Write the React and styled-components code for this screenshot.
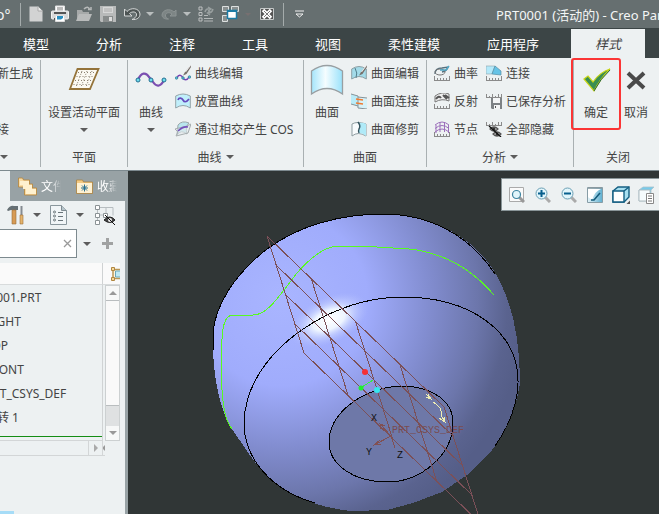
import React from 'react'
import styled, { createGlobalStyle, css } from 'styled-components'

const GlobalStyle = createGlobalStyle`
  *, *::before, *::after { box-sizing: border-box; }
  body { margin: 0; overflow: hidden; background: #303636; }
  body, button, input { font-family: 'Noto Sans', 'Noto Sans CJK SC', sans-serif; font-size: 12px; }
  button { padding: 0; border: 0; background: none; color: inherit; }
  ul { margin: 0; padding: 0; list-style: none; }
  svg { display: block; flex: none; }
`

const Page = styled.div`
  display: flex;
  flex-direction: column;
  min-height: 100vh;
  color: #444;
  overflow: hidden;
`

/* title bar */
const TitleBar = styled.header`
  display: flex;
  align-items: center;
  height: 28px;
  background: #666f70;
  color: #f4f6f6;
  white-space: nowrap;
`
const AppName = styled.span`
  width: 20px;
  margin-left: -4px;
  font-size: 14px;
`
const BarDivider = styled.span`
  width: 1px;
  height: 23px;
  margin: 0 3px 0 4px;
  background: #a4abab;
`
const QuickButton = styled.button`
  display: flex;
  align-items: center;
  justify-content: center;
  width: 24px;
  height: 24px;
`
const QuickArrow = styled(QuickButton)`
  width: 12px;
  margin-right: 1px;
`
const DocTitle = styled.h1`
  flex: 0 0 163px;
  margin: 0 0 0 auto;
  overflow: hidden;
  font-size: 13px;
  font-weight: 400;
`

/* ribbon tabs */
const TabBar = styled.nav`
  display: flex;
  align-items: flex-end;
  height: 30px;
  background: #3c4546;
`
const Tab = styled.button`
  flex: none;
  height: 29px;
  padding: 0 24px 0 23px;
  color: #fff;
  font-size: 13px;
  ${props => props.$active && css`
    margin-left: 8px;
    padding: 0 24px;
    background: #edf1f2;
    color: #444;
    font-style: italic;
  `}
`

/* ribbon */
const Ribbon = styled.section`
  display: flex;
  height: 113px;
  padding: 2px 0 3px;
  background: #edf1f2;
  border-bottom: 1px solid #7d8a8f;
`
const Group = styled.div`
  flex: 0 0 ${props => props.$width}px;
  display: flex;
  flex-direction: column;
  justify-content: space-between;
  border-right: 1px solid #a9b0b2;
  &:last-child { border-right: 0; }
`
const GroupBody = styled.div`
  display: flex;
  gap: ${props => props.$gap || 0}px;
  padding-left: ${props => props.$left || 0}px;
  justify-content: ${props => (props.$center ? 'center' : 'flex-start')};
`
const GroupLabel = styled.div`
  display: flex;
  align-items: center;
  justify-content: ${props => (props.$start ? 'flex-start' : 'center')};
  gap: 4px;
  height: 20px;
  overflow: hidden;
`
const BigButton = styled.button`
  position: relative;
  display: flex;
  flex-direction: column;
  align-items: center;
  flex: none;
  min-width: ${props => props.$width || 36}px;
  height: 82px;
  padding-top: 4px;
  white-space: nowrap;
`
const BigLabel = styled.span`
  margin: 8px 0 6px;
  line-height: 18px;
`
const Marker = styled.span`
  position: absolute;
  inset: -2px -5px 12px -5px;
  border: 2px solid #fb3535;
  border-radius: 3px;
`
const Column = styled.div`
  display: flex;
  flex-direction: column;
  gap: 2px;
`
const SmallButton = styled.button`
  display: flex;
  align-items: center;
  gap: 4px;
  height: 26px;
  white-space: nowrap;
`
const ClippedColumn = styled(Column)`
  margin-left: -15px;
`

/* work area */
const Work = styled.main`
  flex: 1;
  display: flex;
`
const Side = styled.aside`
  flex: 0 0 128px;
  display: flex;
  flex-direction: column;
  border-right: 3px solid #98a2a5;
  background: #edf1f2;
  overflow: hidden;
`
const SideTabs = styled.div`
  display: flex;
  height: 30px;
  background: #98a2a5;
  color: #fff;
`
const SideTab = styled.button`
  flex: 0 0 ${props => props.$width}px;
  display: flex;
  align-items: center;
  gap: 4px;
  padding-left: 8px;
  background: ${props => (props.$active ? '#edf1f2' : 'transparent')};
  overflow: hidden;
  white-space: nowrap;
`
const FadeText = styled.span`
  width: 20px;
  overflow: hidden;
  text-align: left;
  mask-image: linear-gradient(90deg, #000 50%, transparent);
`
const SideTools = styled.div`
  display: flex;
  align-items: center;
  gap: 9px;
  height: 28px;
  padding-left: 7px;
`
const PlainButton = styled.button`
  display: flex;
  align-items: center;
  justify-content: center;
  min-width: ${props => props.$width || 0}px;
`
const SearchRow = styled.div`
  display: flex;
  align-items: center;
  gap: 6px;
  height: 29px;
`
const SearchBox = styled.div`
  display: flex;
  align-items: center;
  width: 77px;
  height: 29px;
  padding-right: 4px;
  border: 1px solid #7d8a8f;
  border-left: 0;
  background: #fff;
`
const SearchInput = styled.input`
  flex: 1;
  min-width: 0;
  border: 0;
  outline: 0;
  background: transparent;
`
const Tree = styled.div`
  display: grid;
  grid-template-columns: 103px 17px;
  margin-top: 5px;
`
const TreeHead = styled.div`
  display: flex;
  justify-content: flex-end;
  align-items: center;
  height: 22px;
  background: #fafafa;
  border-right: ${props => (props.$line ? '1px solid #cfd2d3' : 0)};
  border-bottom: 1px solid #d8dbdc;
  overflow: hidden;
`
const TreeList = styled.ul`
  height: 156px;
  border-right: 1px solid #d0d3d4;
  border-bottom: 1px solid #d3d6d7;
  overflow: hidden;
`
const TreeItem = styled.li`
  height: 24px;
  margin-left: ${props => (props.$root ? -32 : -15)}px;
  line-height: 26px;
  font-size: 12px;
  white-space: nowrap;
`
const InsertLine = styled.li`
  height: 1px;
  margin-top: 7px;
  background: #148d14;
`
const VScroll = styled.div`
  display: flex;
  flex-direction: column;
  margin-left: 2px;
  border: 1px solid #ccd0d1;
  background: #dfe1e2;
`
const ScrollButton = styled.button`
  display: flex;
  align-items: center;
  justify-content: center;
  height: 14px;
  background: #f7f8f8;
`
const Thumb = styled.div`
  flex: 1;
  margin-bottom: 20px;
  background: #f9f9f9;
  border-top: 1px solid #b9bdbf;
  border-bottom: 1px solid #b9bdbf;
`
const HScroll = styled.div`
  display: flex;
  justify-content: flex-end;
  height: 15px;
  width: 105px;
  border-bottom: 1px solid #d3d6d7;
`
const HScrollButton = styled(ScrollButton)`
  width: ${props => props.$width}px;
  border-left: 1px solid #d3d6d7;
  background: #edf1f2;
  overflow: hidden;
`
const SideFoot = styled.div`
  width: 14px;
  height: 3px;
  margin-top: auto;
  background: #a6dcf7;
`

const Viewport = styled.section`
  position: relative;
  flex: 1;
  min-width: 0;
  background: #303636;
  overflow: hidden;
`
const Scene = styled.svg`
  width: 100%;
  height: auto;
`
const ViewTools = styled.div`
  position: absolute;
  top: 7px;
  left: 373px;
  display: flex;
  align-items: center;
  gap: 2px;
  height: 33px;
  padding: 0 3px;
  border: 1px solid #899598;
  background: #edf1f2;
`

const Arrow = ({ color = '#5c5c5c', size = 8 }) => (
  <svg width={size} height={size / 2} viewBox="0 0 8 4"><path d="M0 0h8L4 4z" fill={color} /></svg>
)

const Icon = ({ size = 16, w, h, box = '0 0 16 16', children }) => (
  <svg width={w || size} height={h || size} viewBox={box} fill="none">{children}</svg>
)

const Ruler = ({ y = 15.5, up }) => (
  <path d={up ? `M.5 1v4M3.5 3v2M6.5 1v4M9.5 3v2M12.5 1v4M15.5 1v4M0 ${y}h16` : `M.5 11v4M3.5 13v2M6.5 13v2M9.5 13v2M12.5 13v2M15.5 11v4M0 ${y}h16`} stroke="#8a8a8a" />
)

const Pencil = () => (
  <>
    <path d="M15.500 .5L10 7l-2 3.500L11.500 9 16 2z" fill="#77706b" />
    <path d="M15 1l-4.500 6" stroke="#eee" />
  </>
)

const icons = {
  doc: <Icon w={14} h={16} box="0 0 14 16"><path d="M.5.500h8.500l4.500 4.500v10.500H.5z" fill="#d2d3d3" /><path d="M9 .5V5h4.500" fill="#eee" stroke="#aaa" /></Icon>,
  print: <Icon size={18} box="0 0 18 18"><path d="M4.500 6V1h9v5" fill="#fff" stroke="#e0e0e0" /><path d="M6 3h6M6 5h6" stroke="#777" /><rect x=".5" y="6" width="17" height="8" rx="1" fill="#d7d8d8" stroke="#f2f2f2" /><path d="M3 8h12M3 14h3" stroke="#555" strokeWidth="2" /><path d="M4.500 10.500h9v6h-9z" fill="#fff" stroke="#ddd" /><path d="M6 11h6v2l-2 1.500H6z" fill="#2b8fc0" /></Icon>,
  open: <Icon><path d="M1 15V4h5l1 2h6v3" fill="#a6a9a9" /><path d="M0 15l3-7h13l-3 7z" fill="#b9bbbb" /><path d="M8 3q4-4 6 1m-2-.5h3V1" stroke="#b6b9b9" strokeWidth="1.500" /></Icon>,
  save: <Icon><path d="M0 0h16v16H1l-1-1z" fill="#b8baba" /><path d="M3 1h10v6H3z" fill="#d6d7d7" /><path d="M4 3h8M4 5h8" stroke="#aaa" /><path d="M3 10h10v6H3z" fill="#888c8c" /><path d="M9 11h3v4H9z" fill="#ddd" /></Icon>,
  undo: <Icon w={18} h={14} box="0 0 18 14"><path d="M1.500 2v7H9L6.500 6.500C9 4 14 4.500 13.500 8c-.2 2-2 3.500-4.500 4.500 5 .5 8-2 8-5.500C16.500 1 8 0 4 4.500z" fill="#4d5454" stroke="#d5d8d8" /></Icon>,
  redo: <Icon w={16} h={13} box="0 0 16 13"><path d="M15 2v6H9l2-2C8 3.500 4 5 4.500 8c.2 1.500 1.500 2.500 3 3C3 11.500 1 9 1 7 1.500 1.500 9 0 13 4z" fill="#7d8585" stroke="#8c9393" /></Icon>,
  regen: <Icon><path d="M1 1h3v3H1zM1 6.500h3v3H1zM1 12h3v3H1z" stroke="#bdc0c0" /><path d="M6 12.500h9M6 15h9M6 9.500h4" stroke="#b4b8b8" /><path d="M7 6q1-4 5-3m3 0q-1 4-5 4M10 1l3 2-3 2M12 5L9.500 7 12 9" stroke="#989f9f" strokeWidth="1.500" /></Icon>,
  windows: <Icon w={17} h={17} box="0 0 17 17"><path d="M.5.500h6v5h-6zM9.500.500h7v5h-7zM.5 9.500h5v6h-5z" fill="#8a9090" stroke="#dde0e0" /><path d="M5.500 4.500h9v8h-9z" fill="#fff" stroke="#1d7ba4" strokeWidth="1.500" /><path d="M5 5h10" stroke="#1d7ba4" strokeWidth="2" /></Icon>,
  closeDoc: <Icon w={14} h={12} box="0 0 14 12"><path d="M.5.500h13v11H.5z" fill="#555" stroke="#c4c8c8" /><path d="M3 2l8 8M11 2l-8 8" stroke="#fff" strokeWidth="3.500" /><path d="M4 3l6 6M10 3L4 9" stroke="#777" /></Icon>,
  overflow: <Icon w={9} h={8} box="0 0 9 8"><path d="M0 1h9M1 4h7L4.500 7z" stroke="#f1f1f1" /></Icon>,
  plane: <Icon w={32} h={32} box="0 0 32 32"><path d="M9.500 5h21L22 25H2z" fill="#fbf9f2" stroke="#94733a" strokeWidth="1.800" /><path d="M10 8.500h17M8.500 12.500h17M7 16.500h17M5.500 20.500h17" stroke="#8a8070" strokeDasharray="1 2" /><path d="M14 7l-6 16M19 7l-6 16M24 7l-6 16" stroke="#8a8070" strokeDasharray="1 2" /></Icon>,
  curve: <Icon w={32} h={32} box="0 0 32 32"><path d="M3 16C6 8 11 8 14 13l4 5c4 6 8 4 11-2" stroke="#7b4fb1" strokeWidth="2.200" /><g fill="#6ddbed" stroke="#236f91"><circle cx="3" cy="16" r="2" /><circle cx="16" cy="16" r="2" /><circle cx="29" cy="16" r="2" /></g></Icon>,
  curveEdit: <Icon><path d="M2 13c2-5 5-2 6 0s4 3 6-1" stroke="#7542b4" strokeWidth="1.500" /><g fill="#4fbdd6" stroke="#2a6d87" strokeWidth=".6"><circle cx="1.500" cy="13" r="1.300" /><circle cx="8" cy="13" r="1.300" /><circle cx="14.500" cy="12" r="1.300" /></g><Pencil /></Icon>,
  curveDrop: <Icon><path d="M.7 3Q8-1 15.300 3v12Q8 10 .7 15z" fill="#c0effb" stroke="#94a3a8" /><path d="M3 7c1-3 4-2 5 0s3 3 6-1" stroke="#654abd" strokeWidth="1.700" /></Icon>,
  cos: <Icon><path d="M3 4Q7-1 14 2q-4 4-2 11Q6 8 2 14z" fill="#b9e5ee" stroke="#9aa7aa" /><path d="M0 8l12-3 4-2-3 9-12 3 2-4z" fill="#e4ebec" fillOpacity=".6" stroke="#a6adaf" /><path d="M3 10q5-5 10-4" stroke="#7451bb" strokeWidth="1.600" /></Icon>,
  surface: <Icon w={34} h={32} box="0 0 34 32"><defs><linearGradient id="sf"><stop stopColor="#a4e5fb" /><stop offset=".45" stopColor="#f5fdff" /><stop offset="1" stopColor="#9ae2fb" /></linearGradient></defs><path d="M1.500 7Q17-4 32.500 7v23Q17 19 1.500 30z" fill="url(#sf)" stroke="#999fa2" strokeWidth="1.300" /></Icon>,
  surfEdit: <Icon><path d="M.7 4Q8-1 15.300 4v10Q8 9 .7 14z" fill="#a3dbe9" stroke="#8ea0a5" /><path d="M4 3q3 5 1 10" stroke="#527d8a" /><Pencil /></Icon>,
  surfJoin: <Icon><path d="M0 1l7 2v10l-7-2z" fill="#b9ebf7" /><path d="M7 4l9 1v10H7z" fill="#d6f1f8" /><path d="M0 1l7 2v12M7 4l9 1M7 15l9 1M0 11l7 2" stroke="#879398" /><path d="M5 6l7 1M5 10l7 1" stroke="#ef7b32" strokeWidth="1.700" /></Icon>,
  surfTrim: <Icon><path d="M1 3q5-3 14 0v12Q7 10 1 15z" fill="#f8fbfc" stroke="#8f9da1" /><path d="M8 2q2 4 0 6v4q4 0 7 3V3q-3-2-7-1z" fill="#b0eaf8" /><path d="M7 1q3 4 1 7-1 2 0 4" stroke="#34535e" strokeWidth="1.400" /></Icon>,
  curvature: <Icon><Ruler /><path d="M1 9q0-6 7-6l6-1q-1 4-6 5" stroke="#55707e" strokeWidth="1.400" /><ellipse cx="6" cy="7" rx="5" ry="3" stroke="#777" /><path d="M6 5h6l3-4" stroke="#50a9c7" strokeWidth="1.500" /></Icon>,
  reflect: <Icon><Ruler /><path d="M1 3Q8-2 15 1v7Q8 5 1 9z" fill="#eee" stroke="#777" /><path d="M2 6q3-4 5-1M9 2l4 4M11 2l4 3" stroke="#555" strokeWidth="2" /></Icon>,
  knots: <Icon><Ruler /><path d="M1 4q7-6 14 0M1 7.500q7-6 14 0M1 11q7-6 14 0M2 12V4M6 11V1M10.500 11V1M14.500 12V4" stroke="#9c70bb" /></Icon>,
  link: <Icon><Ruler /><path d="M0 1h9L6 9H0z" fill="#b4e9fa" stroke="#8da1a8" strokeWidth=".6" /><path d="M9 1l6 5v4L6 9z" fill="#66c3e6" stroke="#538ca4" strokeWidth=".7" /></Icon>,
  saved: <Icon><Ruler up y={4.5} /><path d="M5 5h11v11H6l-1-1z" fill="#7d8285" /><path d="M7 5h7v5H7zM8 12h6v4H8z" fill="#f3f5f6" /><path d="M9.500 13v2" stroke="#555" /></Icon>,
  hideAll: <Icon><Ruler up y={4.500} /><g stroke="#555" strokeWidth="1.200" fill="#ddd"><path d="M4 8q4-4 8 0-4 4-8 0zM7 13q4-4 8 0-4 4-8 0z" /></g><g fill="#333"><circle cx="8" cy="8" r="1.500" /><circle cx="11" cy="13" r="1.500" /></g><path d="M3 5l12 11" stroke="#111" strokeWidth="1.300" /></Icon>,
  ok: <Icon w={32} h={32} box="0 0 32 32"><path d="M4 15l4-3 5 6Q20 8 30 5 20 15 14 27z" fill="#3b8e52" stroke="#c9d515" strokeWidth="1.200" /><path d="M14 27Q20 15 30 6" stroke="#276641" /></Icon>,
  cancel: <Icon w={32} h={32} box="0 0 32 32"><path d="M8 9l16 15M24 9L8 24" stroke="#4a4a4a" strokeWidth="4" /></Icon>,
  folders: <Icon w={19} h={19} box="0 0 19 19"><g fill="#f9dba4" stroke="#b58439" strokeWidth=".8"><path d="M.5 1h4l1 2h6v7H.5z" /><path d="M3.500 5h4l1 2h6v7h-6z" /><path d="M6.500 9h4l1 2h7v7h-12z" /></g><path d="M2 4h9v4H2zM5 8h9v4H5zM8 12h10v5H8z" fill="#fff1cf" /></Icon>,
  favorites: <Icon w={17} h={15} box="0 0 17 15"><path d="M.5 1h6l1 2h9v11.500H.5z" fill="#f3c982" stroke="#a67b38" strokeWidth=".7" /><path d="M1 4h15v10H1z" fill="#fff1d2" /><path d="M8.500 5.500v7M5 9h7M6 6.500l5 5M11 6.500l-5 5" stroke="#256e91" /></Icon>,
  tools: <Icon w={17} h={20} box="0 0 17 20"><path d="M0 5q3-5 7-4h4v4H4L1 6z" fill="#667075" /><path d="M5 5h4v14H5z" fill="#d79b55" stroke="#99713e" strokeWidth=".6" /><path d="M14.500 1v9" stroke="#858b91" strokeWidth="2" /><path d="M13 10h3v9h-3z" fill="#e4b46c" stroke="#9e713a" strokeWidth=".6" /></Icon>,
  list: <Icon w={17} h={20} box="0 0 17 20"><path d="M.5.500h11l5 5v14H.5z" fill="#f1f5f7" stroke="#8a979d" /><path d="M11.500.500v5h5" fill="#b7c5cb" stroke="#7f8b91" /><g stroke="#6a757a"><circle cx="4.500" cy="7" r="1" /><circle cx="4.500" cy="11" r="1" /><circle cx="4.500" cy="15" r="1" /><path d="M8 7.500h5M8 11.500h5M8 15.500h5" /></g></Icon>,
  hideTree: <Icon w={20} h={20} box="0 0 20 20"><path d="M4 2.500h14v8M11 3v7M2.500 4v13M4 10h6" stroke="#b7bdc0" /><path d="M.5.500h4v4h-4zM.5 8.500h4v4h-4zM.5 15.500h4v4h-4zM8.500 8.500h4v4h-4z" fill="#fff" stroke="#8b9295" /><path d="M9 15q6-6 11 0-5 5-11 0z" fill="#444" stroke="#222" /><circle cx="15" cy="15" r="2" fill="#eee" /><path d="M10 10l10 10" stroke="#111" /></Icon>,
  frame: <Icon w={9} h={14} box="0 0 9 14"><path d="M2 2.500h12v9H2z" fill="#fff6df" stroke="#ba9756" strokeWidth="1.500" /><path d="M4.500 4h8v6h-8z" fill="#bfeaf4" stroke="#6ba6b8" /><path d="M.5.500h3v3h-3zM.5 10.500h3v3h-3z" fill="#f5d999" stroke="#b08640" /></Icon>,
  clear: <Icon w={9} h={9} box="0 0 9 9"><path d="M1 1l7 7M8 1L1 8" stroke="#999" strokeWidth="1.300" /></Icon>,
  plus: <Icon w={11} h={11} box="0 0 11 11"><path d="M5.500 0v11M0 5.500h11" stroke="#a0a2a2" strokeWidth="3" /></Icon>,
  zoomFit: <Icon w={16} h={16}><path d="M.5.500h14v14H.5z" fill="#fafafa" stroke="#aaa" /><path d="M10 10l5 5" stroke="#999" strokeWidth="3" /><circle cx="7.500" cy="7.500" r="4" fill="#e1f5fb" stroke="#3d84a0" strokeWidth="1.200" /></Icon>,
  zoomIn: <Icon><path d="M10 10l5 5" stroke="#aaa" strokeWidth="3" /><circle cx="6.500" cy="6.500" r="5.500" fill="#e1f5fb" stroke="#6b9fb4" /><path d="M3 6.500h7M6.500 3v7" stroke="#075f8d" strokeWidth="2" /></Icon>,
  zoomOut: <Icon><path d="M10 10l5 5" stroke="#aaa" strokeWidth="3" /><circle cx="6.500" cy="6.500" r="5.500" fill="#e1f5fb" stroke="#6b9fb4" /><path d="M3 6.500h7" stroke="#075f8d" strokeWidth="2" /></Icon>,
  repaint: <Icon><defs><linearGradient id="rp"><stop stopColor="#e6f5fa" /><stop offset="1" stopColor="#5eafd0" /></linearGradient></defs><path d="M.5.500h15v15H.5z" fill="url(#rp)" stroke="#879da6" /><path d="M1 2h13Q8 4 5 13L1 10z" fill="#fff" /><path d="M1 1h14" stroke="#8a989e" strokeWidth="1.500" /><path d="M4 13h3l6-7" stroke="#155c7b" strokeWidth="1.600" /></Icon>,
  cube: <Icon w={18} h={18} box="0 0 18 18"><path d="M1 5l5-4h11v10l-5 5H1z" fill="#a7dff0" stroke="#145f82" strokeWidth="1.400" /><path d="M1 5h11v11H1z" fill="#fff" stroke="#145f82" strokeWidth="1.400" /><path d="M12 5l5-4" stroke="#145f82" strokeWidth="1.400" /><path d="M18 14.500v3.500h-3.500z" fill="#555" /></Icon>,
  viewList: <Icon w={18} h={18} box="0 0 18 18"><path d="M1 4l4-3h11l-3 3v11H1z" fill="#77caea" stroke="#a9c3cd" strokeWidth=".8" /><path d="M1 4h11v11H1z" fill="#f5fbfd" stroke="#b1bdc1" /><path d="M8.500 7.500h7v10h-7z" fill="#fff" stroke="#888" /><path d="M10 10h4M10 12.500h4M10 15h4" stroke="#777" /></Icon>
}

const SmallItem = ({ icon, text }) => <SmallButton>{icons[icon]}<span>{text}</span></SmallButton>

const BigItem = ({ icon, text, arrow, width, marked }) => (
  <BigButton $width={width}>
    {icons[icon]}
    <BigLabel>{text}</BigLabel>
    {arrow && <Arrow />}
    {marked && <Marker />}
  </BigButton>
)

const tabs = ['模型', '分析', '注释', '工具', '视图', '柔性建模', '应用程序']
const treeItems = ['RIGHT', 'TOP', 'FRONT', 'PRT_CSYS_DEF', '旋转 1']

const steps = [0, 1, 2, 3, 4]
const gridPath = steps.map(i => {
  const row = `M${267 + 9.25 * i} ${236 + 29.25 * i}l177 171`
  const column = `M${267 + 44.25 * i} ${236 + 42.75 * i}l37 117`
  return row + column
}).join('')

const Model = () => (
  <Scene viewBox="128 171 531 343" fill="none">
    <defs>
      <radialGradient id="body" gradientUnits="userSpaceOnUse" cx="282" cy="300" r="245">
        <stop offset="0" stopColor="#a9b5ff" />
        <stop offset=".35" stopColor="#a0acfc" />
        <stop offset=".6" stopColor="#828dd0" />
        <stop offset=".8" stopColor="#6c76ab" />
        <stop offset=".92" stopColor="#5a638f" />
        <stop offset="1" stopColor="#555e88" />
      </radialGradient>
      <radialGradient id="shine">
        <stop offset="0" stopColor="#fff" />
        <stop offset=".4" stopColor="#f4fbff" stopOpacity=".92" />
        <stop offset=".65" stopColor="#d8e2ff" stopOpacity=".5" />
        <stop offset="1" stopColor="#b7c3ff" stopOpacity="0" />
      </radialGradient>
    </defs>
    <g shapeRendering="crispEdges">
      <path d="M213 335C214 306 235 274 267 249C298 226 340 214 383 214C428 214 469 234 492 268C510 295 520 333 520 383C515 415 506 431 490 453L467 475L442 492L413 503L387 510L350 511C318 507 298 499 277 485C258 470 248 452 232 429C218 407 212 368 213 335z" fill="url(#body)" />
      <ellipse cx="329" cy="320" rx="42" ry="23" transform="rotate(-25 329 320)" fill="url(#shine)" />
      <g stroke="#000">
        <path d="M213 350v-15C214 306 235 274 267 249C298 226 340 214 383 214C428 214 469 234 495 274" />
        <path d="M315 503C273 491 244 460 244 423C245 382 273 344 323 317C349 304 376 297 403 297C468 297 519 330 518 383C517 409 507 429 495 446" />
        <path d="M329 442C329 414 362 387 403 386C433 387 453 401 453 423C453 454 422 482 387 482C354 482 329 465 329 442z" fill="#6e78a8" />
      </g>
      <path d="M232 429C226 422 223 408 222 390L221.500 350C222 328 224 315 233 315H253C267 315 277 299 297 273C311 257 325 246 339 246H360L393 248C428 248 464 260 494 295" stroke="#58fb20" />
      <path d={gridPath} stroke="#7b5058" />
      <path d="M373 380l-11 7" stroke="#32ee43" />
      <path d="M391 436l-17 9m6-5l-6 5 7-1M391 436l-11-12m1 5l-1-5 5 2M391 436l4 12" stroke="#815052" />
      <path d="M426 394l5 5m-3-5l3 5-5-2M433 402q10 6 8 13l4 7m-6-4l6 4-1-5" stroke="#f1eeb2" />
    </g>
    <circle cx="361" cy="388" r="2.500" fill="#20ee30" />
    <circle cx="365" cy="372" r="3" fill="#f62f35" />
    <circle cx="377" cy="390" r="3" fill="#35e7ee" />
    <g fill="#111" fontFamily="'Liberation Mono', monospace" fontSize="10">
      <text x="371" y="421">X</text>
      <text x="366" y="455">Y</text>
      <text x="397" y="458">Z</text>
      <text x="392" y="433" fill="#794c50">PRT_CSYS_DEF</text>
    </g>
  </Scene>
)

const App = () => {
  return (
    <Page>
      <GlobalStyle />
      <TitleBar>
        <AppName>o°</AppName>
        <BarDivider />
        <QuickButton aria-label="新建">{icons.doc}</QuickButton>
        <QuickButton aria-label="打印">{icons.print}</QuickButton>
        <QuickButton aria-label="打开">{icons.open}</QuickButton>
        <QuickButton aria-label="保存">{icons.save}</QuickButton>
        <QuickButton aria-label="撤消">{icons.undo}</QuickButton>
        <QuickArrow aria-label="撤消列表"><Arrow color="#b9bebe" /></QuickArrow>
        <QuickButton aria-label="重做">{icons.redo}</QuickButton>
        <QuickArrow aria-label="重做列表"><Arrow color="#b9bebe" /></QuickArrow>
        <QuickButton aria-label="重新生成">{icons.regen}</QuickButton>
        <QuickButton aria-label="窗口">{icons.windows}</QuickButton>
        <QuickArrow aria-label="窗口列表"><Arrow color="#777071" size={6} /></QuickArrow>
        <QuickButton aria-label="关闭窗口">{icons.closeDoc}</QuickButton>
        <BarDivider />
        <QuickButton aria-label="自定义">{icons.overflow}</QuickButton>
        <DocTitle>PRT0001 (活动的) - Creo Parametric</DocTitle>
      </TitleBar>

      <TabBar>
        {tabs.map(tab => <Tab key={tab}>{tab}</Tab>)}
        <Tab $active>样式</Tab>
      </TabBar>

      <Ribbon>
        <Group $width={41}>
          <ClippedColumn>
            <SmallButton>重新生成</SmallButton>
            <SmallButton />
            <SmallButton>连接</SmallButton>
          </ClippedColumn>
          <GroupLabel $start><Arrow /></GroupLabel>
        </Group>
        <Group $width={87}>
          <GroupBody $center><BigItem icon="plane" text="设置活动平面" arrow /></GroupBody>
          <GroupLabel>平面</GroupLabel>
        </Group>
        <Group $width={176}>
          <GroupBody $left={5} $gap={6}>
            <BigItem icon="curve" text="曲线" arrow />
            <Column>
              <SmallItem icon="curveEdit" text="曲线编辑" />
              <SmallItem icon="curveDrop" text="放置曲线" />
              <SmallItem icon="cos" text="通过相交产生 COS" />
            </Column>
          </GroupBody>
          <GroupLabel>曲线<Arrow /></GroupLabel>
        </Group>
        <Group $width={123}>
          <GroupBody $left={5} $gap={6}>
            <BigItem icon="surface" text="曲面" />
            <Column>
              <SmallItem icon="surfEdit" text="曲面编辑" />
              <SmallItem icon="surfJoin" text="曲面连接" />
              <SmallItem icon="surfTrim" text="曲面修剪" />
            </Column>
          </GroupBody>
          <GroupLabel>曲面</GroupLabel>
        </Group>
        <Group $width={147}>
          <GroupBody $left={7} $gap={8}>
            <Column>
              <SmallItem icon="curvature" text="曲率" />
              <SmallItem icon="reflect" text="反射" />
              <SmallItem icon="knots" text="节点" />
            </Column>
            <Column>
              <SmallItem icon="link" text="连接" />
              <SmallItem icon="saved" text="已保存分析" />
              <SmallItem icon="hideAll" text="全部隐藏" />
            </Column>
          </GroupBody>
          <GroupLabel>分析<Arrow /></GroupLabel>
        </Group>
        <Group $width={88}>
          <GroupBody $left={2}>
            <BigItem icon="ok" text="确定" width={40} marked />
            <BigItem icon="cancel" text="取消" width={40} />
          </GroupBody>
          <GroupLabel>关闭</GroupLabel>
        </Group>
      </Ribbon>

      <Work>
        <Side>
          <SideTabs>
            <SideTab $width={10} $active aria-label="模型树" />
            <SideTab $width={58}>{icons.folders}<FadeText>文件夹</FadeText></SideTab>
            <SideTab $width={57}>{icons.favorites}<FadeText>收藏夹</FadeText></SideTab>
          </SideTabs>
          <SideTools>
            <PlainButton aria-label="设置">{icons.tools}</PlainButton>
            <PlainButton aria-label="设置列表"><Arrow /></PlainButton>
            <PlainButton aria-label="显示">{icons.list}</PlainButton>
            <PlainButton aria-label="显示列表"><Arrow /></PlainButton>
            <PlainButton aria-label="隐藏" $width={24}>{icons.hideTree}</PlainButton>
          </SideTools>
          <SearchRow>
            <SearchBox>
              <SearchInput type="text" aria-label="搜索" />
              <PlainButton aria-label="清除">{icons.clear}</PlainButton>
            </SearchBox>
            <PlainButton aria-label="搜索选项"><Arrow /></PlainButton>
            <PlainButton aria-label="添加" $width={20}>{icons.plus}</PlainButton>
          </SearchRow>
          <Tree>
            <TreeHead $line />
            <TreeHead>{icons.frame}</TreeHead>
            <TreeList>
              <TreeItem $root>PRT0001.PRT</TreeItem>
              {treeItems.map(item => <TreeItem key={item}>{item}</TreeItem>)}
              <InsertLine />
            </TreeList>
            <VScroll>
              <ScrollButton aria-label="向上"><svg width="8" height="4"><path d="M0 4h8L4 0z" fill="#999" /></svg></ScrollButton>
              <Thumb />
              <ScrollButton aria-label="向下"><Arrow color="#999" /></ScrollButton>
            </VScroll>
          </Tree>
          <HScroll>
            <HScrollButton $width={14} aria-label="向右"><svg width="4" height="8"><path d="M0 0v8l4-4z" fill="#aaa" /></svg></HScrollButton>
            <HScrollButton $width={3} aria-label="向左"><svg width="4" height="8"><path d="M4 0v8L0 4z" fill="#999" /></svg></HScrollButton>
          </HScroll>
          <SideFoot />
        </Side>

        <Viewport>
          <Model />
          <ViewTools>
            <QuickButton aria-label="重新调整">{icons.zoomFit}</QuickButton>
            <QuickButton aria-label="放大">{icons.zoomIn}</QuickButton>
            <QuickButton aria-label="缩小">{icons.zoomOut}</QuickButton>
            <QuickButton aria-label="重画">{icons.repaint}</QuickButton>
            <QuickButton aria-label="显示样式">{icons.cube}</QuickButton>
            <QuickButton aria-label="已保存方向">{icons.viewList}</QuickButton>
          </ViewTools>
        </Viewport>
      </Work>
    </Page>
  )
}

export default App
